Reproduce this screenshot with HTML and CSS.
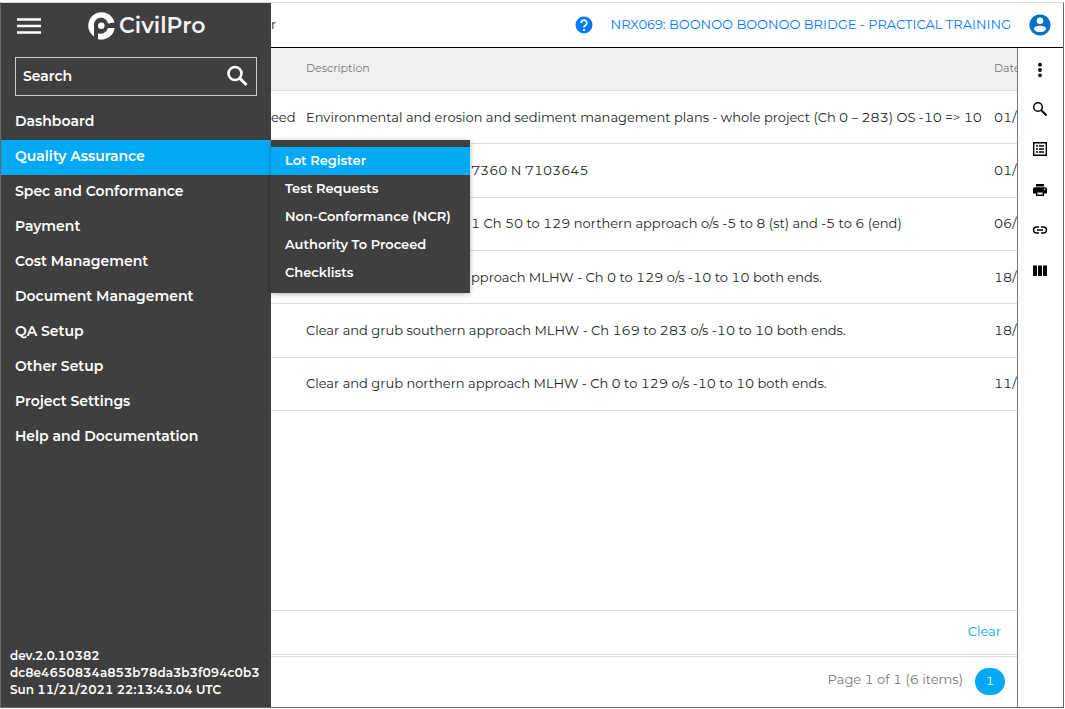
FILE: index.html
```html
<!DOCTYPE html>
<html lang="en">
<head>
<meta charset="utf-8">
<title>CivilPro - Lot Register</title>
<link rel="stylesheet" href="styles.css">
</head>
<body>
<div class="window">
  <aside class="sidebar">
    <div class="brand">
      <button class="icon-button menu-button" type="button" aria-label="Menu">
        <svg width="24" height="16" viewBox="0 0 24 16"><path d="M0 1.500h24M0 8h24M0 14.500h24" stroke="#fff" stroke-width="2.700"/></svg>
      </button>
      <div class="logo">
        <svg width="28" height="28" viewBox="0 0 28 28" aria-hidden="true">
          <path d="M4.500 23.300A13.300 13.300 0 1 1 26.500 10.500L20 11.500A7 7 0 0 0 6 14V24.500z" fill="#fff"/>
          <path d="M26.700 16A13.500 13.500 0 0 1 10 27.200V21.200a7.600 7.600 0 0 0 10-5.200z" fill="#fff"/>
          <circle cx="13.300" cy="13.700" r="3.300" fill="#fff"/>
        </svg>
        <span class="logo-text">CivilPro</span>
      </div>
    </div>
    <form class="search">
      <input class="search-input" type="text" placeholder="Search" aria-label="Search">
      <button class="icon-button" type="button" aria-label="Run search">
        <svg width="22" height="22" viewBox="0 0 22 22"><circle cx="9" cy="8.500" r="6.500" fill="none" stroke="#fff" stroke-width="2.600"/><path d="M13.500 13l7 7" stroke="#fff" stroke-width="3"/></svg>
      </button>
    </form>
    <nav>
      <ul class="menu">
        <li><a class="menu-link" href="#">Dashboard</a></li>
        <li class="menu-open"><a class="menu-link active" href="#">Quality Assurance</a>
          <ul class="submenu">
            <li><a class="submenu-link active" href="#">Lot Register</a></li>
            <li><a class="submenu-link" href="#">Test Requests</a></li>
            <li><a class="submenu-link" href="#">Non-Conformance (NCR)</a></li>
            <li><a class="submenu-link" href="#">Authority To Proceed</a></li>
            <li><a class="submenu-link" href="#">Checklists</a></li>
          </ul>
        </li>
        <li><a class="menu-link" href="#">Spec and Conformance</a></li>
        <li><a class="menu-link" href="#">Payment</a></li>
        <li><a class="menu-link" href="#">Cost Management</a></li>
        <li><a class="menu-link" href="#">Document Management</a></li>
        <li><a class="menu-link" href="#">QA Setup</a></li>
        <li><a class="menu-link" href="#">Other Setup</a></li>
        <li><a class="menu-link" href="#">Project Settings</a></li>
        <li><a class="menu-link" href="#">Help and Documentation</a></li>
      </ul>
    </nav>
    <div class="version">
      <div>dev.2.0.10382</div>
      <div>dc8e4650834a853b78da3b3f094c0b3</div>
      <div>Sun 11/21/2021 22:13:43.04 UTC</div>
    </div>
  </aside>

  <div class="page">
    <header class="topbar">
      <span class="page-title">r</span>
      <button class="icon-button" type="button" aria-label="Help">
        <svg width="18" height="18" viewBox="0 0 18 18"><circle cx="9" cy="9" r="8.500" fill="#007bff"/><path d="M6.200 7a2.800 2.800 0 1 1 4.600 2.100C9.700 9.900 9 10.300 9 11.500M9 13v2" fill="none" stroke="#fff" stroke-width="1.800"/></svg>
      </button>
      <a class="project" href="#">NRX069: BOONOO BOONOO BRIDGE - PRACTICAL TRAINING</a>
      <button class="icon-button" type="button" aria-label="Account">
        <svg width="22" height="22" viewBox="0 0 22 22"><circle cx="11" cy="11" r="10.600" fill="#0072c6"/><circle cx="11" cy="6.800" r="3.300" fill="#fff"/><path d="M4.800 15.200c0-2.300 3.800-3.400 6.200-3.400s6.200 1.100 6.200 3.400C15.800 17.200 13.600 18 11 18s-4.800-.8-6.200-2.800z" fill="#fff"/></svg>
      </button>
    </header>
    <div class="workspace">
      <main class="content">
        <table class="grid">
          <thead><tr><th class="col-type"></th><th class="col-desc">Description</th><th class="col-date">Date</th></tr></thead>
          <tbody>
            <tr><td>eed</td><td>Environmental and erosion and sediment management plans - whole project (Ch 0 – 283) OS -10 =&gt; 10</td><td>01/</td></tr>
            <tr><td></td><td class="covered">7360 N 7103645</td><td>01/</td></tr>
            <tr><td></td><td class="covered">1 Ch 50 to 129 northern approach o/s -5 to 8 (st) and -5 to 6 (end)</td><td>06/</td></tr>
            <tr><td></td><td class="covered">pproach MLHW - Ch 0 to 129 o/s -10 to 10 both ends.</td><td>18/</td></tr>
            <tr><td></td><td>Clear and grub southern approach MLHW - Ch 169 to 283 o/s -10 to 10 both ends.</td><td>18/</td></tr>
            <tr><td></td><td>Clear and grub northern approach MLHW - Ch 0 to 129 o/s -10 to 10 both ends.</td><td>11/</td></tr>
          </tbody>
        </table>
        <div class="filter-bar"><a class="clear" href="#">Clear</a></div>
        <div class="pager"><span class="page-info">Page 1 of 1 (6 items)</span><button class="page-number" type="button">1</button></div>
      </main>
      <div class="toolbar" role="toolbar" aria-label="Grid tools">
        <button class="icon-button" type="button" aria-label="More"><svg width="16" height="16" viewBox="0 0 16 16"><circle cx="8" cy="2.700" r="1.900"/><circle cx="8" cy="8" r="1.900"/><circle cx="8" cy="13.300" r="1.900"/></svg></button>
        <button class="icon-button" type="button" aria-label="Find"><svg width="16" height="16" viewBox="0 0 16 16"><circle cx="6" cy="5" r="4.300" fill="none" stroke="#000" stroke-width="1.500"/><path d="M9 8l5.500 5.500" stroke="#000" stroke-width="2"/></svg></button>
        <button class="icon-button" type="button" aria-label="List"><svg width="16" height="16" viewBox="0 0 16 16"><path d="M1.700 .7h12.600v12.600H1.700z" fill="none" stroke="#000" stroke-width="1.400"/><path d="M4 4h2M7 4h5M4 7h2M7 7h5M4 10h2M7 10h5" stroke="#000" stroke-width="1.400"/></svg></button>
        <button class="icon-button" type="button" aria-label="Print"><svg width="16" height="16" viewBox="0 0 16 16"><path d="M4 2h8v2.500H4zM3 5.200h10a2 2 0 0 1 2 2V11.500h-3V9.500H4v2H1V7.200a2 2 0 0 1 2-2z"/><path d="M4.700 9.700h6.600v3.600H4.700z" fill="#fff" stroke="#000" stroke-width="1.400"/><circle cx="12.700" cy="7.300" r=".7" fill="#fff"/></svg></button>
        <button class="icon-button" type="button" aria-label="Link"><svg width="16" height="16" viewBox="0 0 16 16"><path d="M7 5H4.500a3 3 0 0 0 0 6H7M9 5h2.500a3 3 0 0 1 0 6H9M5 8h6" fill="none" stroke="#000" stroke-width="1.400"/></svg></button>
        <button class="icon-button" type="button" aria-label="Columns"><svg width="16" height="16" viewBox="0 0 16 16"><path d="M1 3.500h4V14H1zM6 3.500h4V14H6zM11 3.500h4V14h-4z"/></svg></button>
      </div>
    </div>
  </div>
</div>
</body>
</html>
```
FILE: styles.css
```css
* { box-sizing: border-box; }

body {
  margin: 0;
  padding: 2px 1px 0 0;
  background: #fff;
  color: #212529;
  font-family: Montserrat, Inter, "Open Sans", sans-serif;
  font-size: 13px;
  font-variant-numeric: tabular-nums;
  line-height: 17px;
}

a { text-decoration: none; }
ul { list-style: none; margin: 0; padding: 0; }
svg { display: block; }

.window {
  display: flex;
  height: calc(100vh - 3px);
  border: 1px solid #666;
  border-top-color: #ddd;
}

.icon-button {
  padding: 0;
  border: 0;
  background: none;
}

.sidebar {
  position: relative;
  z-index: 1;
  display: flex;
  flex-direction: column;
  flex: none;
  width: 270px;
  background: #3f3f3f;
  color: #fff;
}

.brand {
  display: flex;
  align-items: center;
  gap: 47px;
  height: 46px;
  padding-left: 16px;
}

.logo {
  display: flex;
  align-items: center;
  gap: 3px;
}

.logo-text {
  color: #f2f2f2;
  font-size: 22px;
  font-weight: 600;
  line-height: 28px;
}

.search {
  display: flex;
  align-items: center;
  height: 39px;
  margin: 8px 14px 9px;
  padding: 0 8px 1px 7px;
  border: 1px solid #ccc;
}

.search-input {
  flex: 1;
  min-width: 0;
  padding: 0;
  border: 0;
  outline: 0;
  background: none;
  color: #fff;
  font: inherit;
  font-size: 14px;
  font-weight: 600;
}

.search-input::placeholder { color: #fff; opacity: 1; }

.menu-open { position: relative; }

.menu-link,
.submenu-link {
  display: block;
  padding-left: 14px;
  color: #fff;
  font-size: 14px;
  font-weight: 600;
  line-height: 32px;
  white-space: nowrap;
}

.menu-link { padding-bottom: 3px; }

.submenu {
  position: absolute;
  top: 0;
  left: 100%;
  width: 199px;
  padding: 7px 0 6px;
  background: #3f3f3f;
  box-shadow: 0 1px 5px rgba(0, 0, 0, 0.3);
}

.submenu-link {
  padding: 0 0 2px 14px;
  font-size: 13px;
  line-height: 26px;
}

.active { background: #03a9f4; }

.version {
  margin-top: auto;
  padding: 0 0 9px 9px;
  font-size: 12px;
  font-weight: 600;
  white-space: nowrap;
}

.page {
  display: flex;
  flex-direction: column;
  flex: 1;
  min-width: 0;
}

.topbar {
  display: flex;
  align-items: center;
  gap: 18px;
  height: 45px;
  padding: 0 12px 1px 0;
  border-bottom: 1px solid #000;
}

.page-title { flex: 1; }

.project {
  color: #007bff;
  font-variant-numeric: normal;
  white-space: nowrap;
}

.workspace {
  display: flex;
  flex: 1;
  min-height: 0;
}

.content {
  display: flex;
  flex-direction: column;
  flex: 1;
  min-width: 0;
  overflow: hidden;
}

.grid {
  width: 100%;
  height: 363px;
  table-layout: fixed;
  border-collapse: separate;
  border-spacing: 0;
}

.grid th,
.grid td {
  height: 53px;
  padding: 0;
  border-bottom: 1px solid #ddd;
  overflow: hidden;
  text-align: left;
  white-space: nowrap;
}

.grid th {
  height: 43px;
  padding-bottom: 2px;
  background: #f0f0f0;
  color: #777;
  font-size: 11px;
  font-weight: 400;
}

.col-type { width: 35px; }
.col-date { width: 23px; }
.grid td.covered { padding-left: 165px; }

.filter-bar {
  display: flex;
  align-items: center;
  justify-content: flex-end;
  height: 45px;
  margin-top: auto;
  padding: 0 16px 2px 0;
  border-top: 1px solid #ddd;
  border-bottom: 1px solid #ddd;
}

.clear { color: #03a9f4; }

.pager {
  display: flex;
  align-items: center;
  justify-content: flex-end;
  gap: 12px;
  height: 51px;
  margin-top: 1px;
  padding: 0 12px 2px 0;
  border-top: 1px solid #ddd;
  color: #777;
}

.page-info { padding-bottom: 3px; }

.page-number {
  width: 30px;
  height: 27px;
  padding: 0 0 2px;
  border: 0;
  border-radius: 14px;
  background: #03a9f4;
  color: #fff;
  font: inherit;
  font-size: 12px;
}

.toolbar {
  display: flex;
  flex-direction: column;
  align-items: center;
  gap: 24px;
  width: 46px;
  padding: 14px 1px 0 0;
  border-left: 1px solid #777;
}
```
